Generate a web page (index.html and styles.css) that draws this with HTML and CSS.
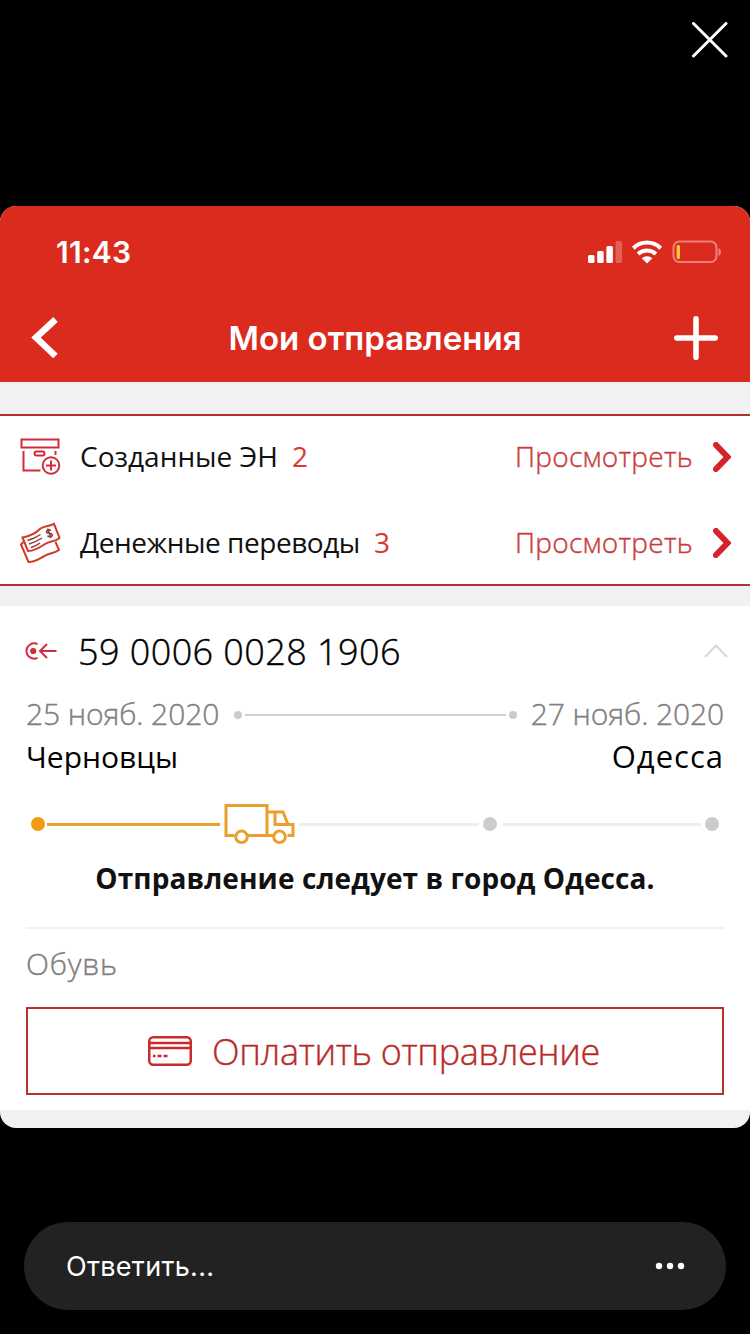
FILE: index.html
```html
<!DOCTYPE html>
<html lang="ru">
<head>
    <meta charset="UTF-8">
    <meta name="viewport" content="width=device-width, initial-scale=1.0">
    <title>Мои отправления</title>
    <link rel="stylesheet" href="styles.css">
</head>
<body>
    <div class="story-top">
        <svg class="close" width="36" height="36" viewBox="0 0 36 36">
            <path d="M1.5 1.5l32.500 32.500M34 1.5L1.500 34"/>
        </svg>
    </div>

    <div class="screen">
        <div class="header">
            <div class="status">
                <span class="time">11:43</span>
                <svg width="134" height="26" viewBox="0 0 134 26">
                    <g fill="#fff">
                        <rect x="1" y="16" width="6.5" height="8" rx="1.5"/>
                        <rect x="10.2" y="12" width="6.5" height="12" rx="1.5"/>
                        <rect x="19.4" y="7" width="6.5" height="17" rx="1.5"/>
                        <rect x="28.6" y="2" width="6.5" height="22" rx="1.5" opacity=".25"/>
                    </g>
                    <g fill="none" stroke="#fff" stroke-width="4">
                        <path d="M46.300 9.2a19.6 19.6 0 0 1 27.4 0"/>
                        <path d="M51.100 15a13 13 0 0 1 17.8 0"/>
                    </g>
                    <path d="M54.700 19.200a8 8 0 0 1 10.6 0l-5.3 5.4z" fill="#fff"/>
                    <rect x="86.500" y="2.500" width="43" height="20.6" rx="6" fill="none" stroke="#f08078" stroke-width="2"/>
                    <rect x="89.600" y="6" width="3.4" height="14" rx="1.5" fill="#f5c638"/>
                    <path d="M131.500 9q2.500 1 2.500 4t-2.500 4z" fill="#f08078"/>
                </svg>
            </div>
            <div class="nav">
                <svg width="28" height="42" viewBox="0 0 28 42">
                    <path d="M24.5 2.500L5 20.500l19.500 18.500" stroke-width="6.500"/>
                </svg>
                <h1>Мои отправления</h1>
                <svg width="44" height="44" viewBox="0 0 44 44">
                    <path d="M22 2.800v38.400M2.800 22h38.400" stroke-width="5.600" stroke-linecap="round"/>
                </svg>
            </div>
        </div>

        <div class="links">
            <div class="link">
                <svg class="link-icon" width="42" height="42" viewBox="0 0 42 42">
                    <path d="M1.500 3.500h37v8h-37zM3.500 15v19.500h17M35.500 15v4"/>
                    <rect x="14.500" y="15.500" width="10" height="4" rx="2"/>
                    <circle cx="31" cy="29.500" r="8.300"/>
                    <path d="M31 24.500v10M26 29.500h10"/>
                </svg>
                <span class="link-name">Созданные ЭН</span>
                <span class="count">2</span>
                <span class="view">Просмотреть</span>
                <svg class="arrow" width="18" height="30" viewBox="0 0 18 30">
                    <path d="M3 3l11.500 12L3 27"/>
                </svg>
            </div>
            <div class="link">
                <svg class="link-icon money" width="42" height="42" viewBox="0 0 42 42">
                    <path d="M2.500 15.500C9 14.500 16 11 20.500 6.500 25 3.500 30 4.500 34 1.800L39.500 16c-5 4.500-9.500 2.500-14.500 6-5 3.500-10 7-17 7z"/>
                    <path d="M3.500 20L1 22.500 8.500 40c7 0 11-3.500 16-6 5-3.500 9-2 14.500-6l-3.500-8"/>
                    <path class="thin" d="M7.500 18.500q7-2 13-6M9 22q7-2 13-6M11 25.500q6-2 9-4.500"/>
                    <path class="thin" d="M31 8.500c-2-1.500-5-.5-4.500 1.500s5 .5 5.800 2.500-3 3-4.800 1.200M27.500 6.500l3.500 9.500"/>
                </svg>
                <span class="link-name transfers">Денежные переводы</span>
                <span class="count">3</span>
                <span class="view">Просмотреть</span>
                <svg class="arrow" width="18" height="30" viewBox="0 0 18 30">
                    <path d="M3 3l11.500 12L3 27"/>
                </svg>
            </div>
        </div>

        <div class="parcel">
            <div class="parcel-head">
                <svg width="32" height="20" viewBox="0 0 32 20">
                    <path d="M12.500 3.200A7.600 7.600 0 1 0 12.500 16.800M31.500 10H15M22 3l-7 7 7 7" fill="none" stroke="#cf2f45" stroke-width="2"/>
                    <circle cx="8.200" cy="10" r="3.100" fill="#cf2f33"/>
                </svg>
                <span class="number">59 0006 0028 1906</span>
                <svg class="collapse" width="26" height="16" viewBox="0 0 26 16">
                    <path d="M2 14L13 2.500 24 14" fill="none" stroke="#d8d8d8" stroke-width="2"/>
                </svg>
            </div>
            <div class="dates">
                <span>25 нояб. 2020</span>
                <div class="range"><i></i><b></b><i></i></div>
                <span>27 нояб. 2020</span>
            </div>
            <div class="cities">
                <span>Черновцы</span>
                <span class="to">Одесса</span>
            </div>
            <div class="track">
                <i class="dot done"></i>
                <i class="line done"></i>
                <svg width="72" height="42" viewBox="0 0 72 42">
                    <g fill="none" stroke="#e9a02c" stroke-width="3">
                        <path d="M11.500 32.500H3v-30h41v30H24.500M44 9h16l5 12.500h5v11h-5.500M44 32.500h6M52 9v12.500h13"/>
                        <circle cx="18.500" cy="33.800" r="5.800"/>
                        <circle cx="56.500" cy="33.800" r="5.800"/>
                    </g>
                </svg>
                <i class="line first"></i>
                <i class="dot"></i>
                <i class="line"></i>
                <i class="dot"></i>
            </div>
            <p class="state">Отправление следует в город Одесса.</p>
            <p class="goods">Обувь</p>
            <div class="pay">
                <svg width="44" height="30" viewBox="0 0 44 30">
                    <g fill="none" stroke="#c92b2b" stroke-width="2.500">
                        <rect x="1.250" y="1.250" width="41.500" height="27.500" rx="4"/>
                        <path d="M1 7h42M1 12h42"/>
                        <path d="M5 20h2.500M9.500 20h4M15.500 20h4"/>
                    </g>
                </svg>
                <span>Оплатить отправление</span>
            </div>
        </div>
    </div>

    <div class="reply">
        <span>Ответить...</span>
        <svg width="30" height="8" viewBox="0 0 30 8" fill="#fff">
            <circle cx="4" cy="4" r="3.200"/>
            <circle cx="15" cy="4" r="3.200"/>
            <circle cx="26" cy="4" r="3.200"/>
        </svg>
    </div>
</body>
</html>
```
FILE: styles.css
```css
* {
    box-sizing: border-box;
}
body {
    margin: 0;
    background: #000;
    font-family: "Open Sans", "Noto Sans", sans-serif;
    color: #111;
}
svg {
    display: block;
    flex: none;
}
span, h1 {
    white-space: nowrap;
}
.story-top {
    height: 206px;
    display: flex;
    justify-content: flex-end;
    padding: 22px 22px 0;
}
.close path {
    stroke: #fff;
    stroke-width: 3;
    stroke-linecap: round;
}
.screen {
    height: 922px;
    border-radius: 16px;
    overflow: hidden;
    background: #f1f1f1;
}
.header {
    height: 176px;
    background: #db2b1f;
    color: #fff;
    font-family: Inter, "Open Sans", sans-serif;
}
.status {
    height: 88px;
    display: flex;
    justify-content: space-between;
    align-items: center;
    padding: 4px 29px 0 56px;
}
.time {
    font-size: 30px;
    font-weight: 600;
    letter-spacing: 0.3px;
}
.nav {
    height: 88px;
    display: flex;
    justify-content: space-between;
    align-items: center;
    padding: 0 32px 0 31px;
}
.nav h1 {
    margin: 0 0 0 17px;
    font-size: 33px;
    font-weight: 600;
}
.nav path {
    fill: none;
    stroke: #fff;
}
.links {
    height: 172px;
    margin: 32px 0 20px;
    background: #fff;
    border-top: 2px solid #b3302f;
    border-bottom: 2px solid #b3303a;
}
.link {
    height: 86px;
    display: flex;
    align-items: center;
    padding: 0 19px 4px 20px;
    font-size: 28px;
}
.link span {
    padding-bottom: 2px;
}
.link-icon {
    margin-right: 18px;
    fill: none;
    stroke: #d02c39;
    stroke-width: 2;
}
.money {
    stroke: #d13a2c;
}
.money .thin {
    stroke: #8c3a36;
    stroke-width: 1.5;
}
.transfers {
    letter-spacing: -0.45px;
}
.count {
    margin-left: 14px;
    color: #d63a33;
}
/* the light weight is a bit too thin at these sizes */
.view, .number, .dates, .goods, .pay {
    font-weight: 300;
    -webkit-text-stroke: 0.4px;
}
.view {
    margin-left: auto;
    color: #c93c3c;
    letter-spacing: 0.3px;
}
.arrow {
    margin-left: 20px;
    fill: none;
    stroke: #d6222a;
    stroke-width: 6;
    stroke-linecap: round;
}
.parcel {
    height: 504px;
    padding: 20px 26px 0;
    background: #fff;
}
.parcel-head {
    height: 50px;
    display: flex;
    align-items: center;
}
.parcel-head > svg:first-child {
    margin-left: -1px;
}
.number {
    margin-left: 21px;
    font-size: 36px;
    letter-spacing: 0.42px;
    color: #000;
}
.collapse {
    margin: 0 -5px 0 auto;
}
.dates {
    height: 40px;
    margin-top: 18px;
    display: flex;
    align-items: center;
    font-size: 30px;
    letter-spacing: -0.1px;
    color: #808080;
}
.dates span {
    padding-bottom: 2px;
}
.range {
    flex: 1;
    display: flex;
    align-items: center;
    gap: 3px;
    padding: 2px 14px 0 15px;
}
.range i {
    width: 8px;
    height: 8px;
    border-radius: 50%;
    background: #ccc;
}
.range b {
    flex: 1;
    height: 2px;
    background: #d2d2d2;
}
.cities {
    height: 44px;
    display: flex;
    justify-content: space-between;
    align-items: center;
    font-size: 30px;
    color: #000;
}
.to {
    font-size: 31px;
    letter-spacing: 1px;
}
.track {
    height: 42px;
    margin: 25px 5px 0;
    display: flex;
    align-items: center;
}
.dot {
    width: 14px;
    height: 14px;
    border-radius: 50%;
    background: #ccc;
}
.dot.done {
    background: #f29a13;
}
.line {
    flex: 1;
    height: 3px;
    margin: 0 4px 0 6px;
    background: #eee;
}
.line.done {
    flex: none;
    width: 173px;
    margin: 0 3px 0 2px;
    background: #e9a02c;
}
.line.first {
    flex: none;
    width: 180px;
    margin: 0 4px;
}
.state {
    height: 84px;
    margin: 0;
    padding-top: 13px;
    border-bottom: 2px solid #f1f1f1;
    text-align: center;
    font-size: 28px;
    font-weight: 700;
    letter-spacing: 0.1px;
    line-height: 40px;
}
.goods {
    height: 78px;
    margin: 0;
    padding-top: 15px;
    font-size: 30px;
    letter-spacing: 0.8px;
    line-height: 40px;
    color: #808080;
}
.pay {
    height: 88px;
    display: flex;
    justify-content: center;
    align-items: center;
    gap: 20px;
    padding-right: 2px;
    border: 2px solid #b4332f;
    font-size: 36px;
    letter-spacing: -0.3px;
    color: #b92b28;
}
.reply {
    height: 88px;
    margin: 94px 24px 0;
    padding: 0 41px 0 42px;
    display: flex;
    justify-content: space-between;
    align-items: center;
    border-radius: 44px;
    background: #222;
    color: #fff;
    font-family: Inter, sans-serif;
    font-size: 27px;
    letter-spacing: 0.3px;
}
```
